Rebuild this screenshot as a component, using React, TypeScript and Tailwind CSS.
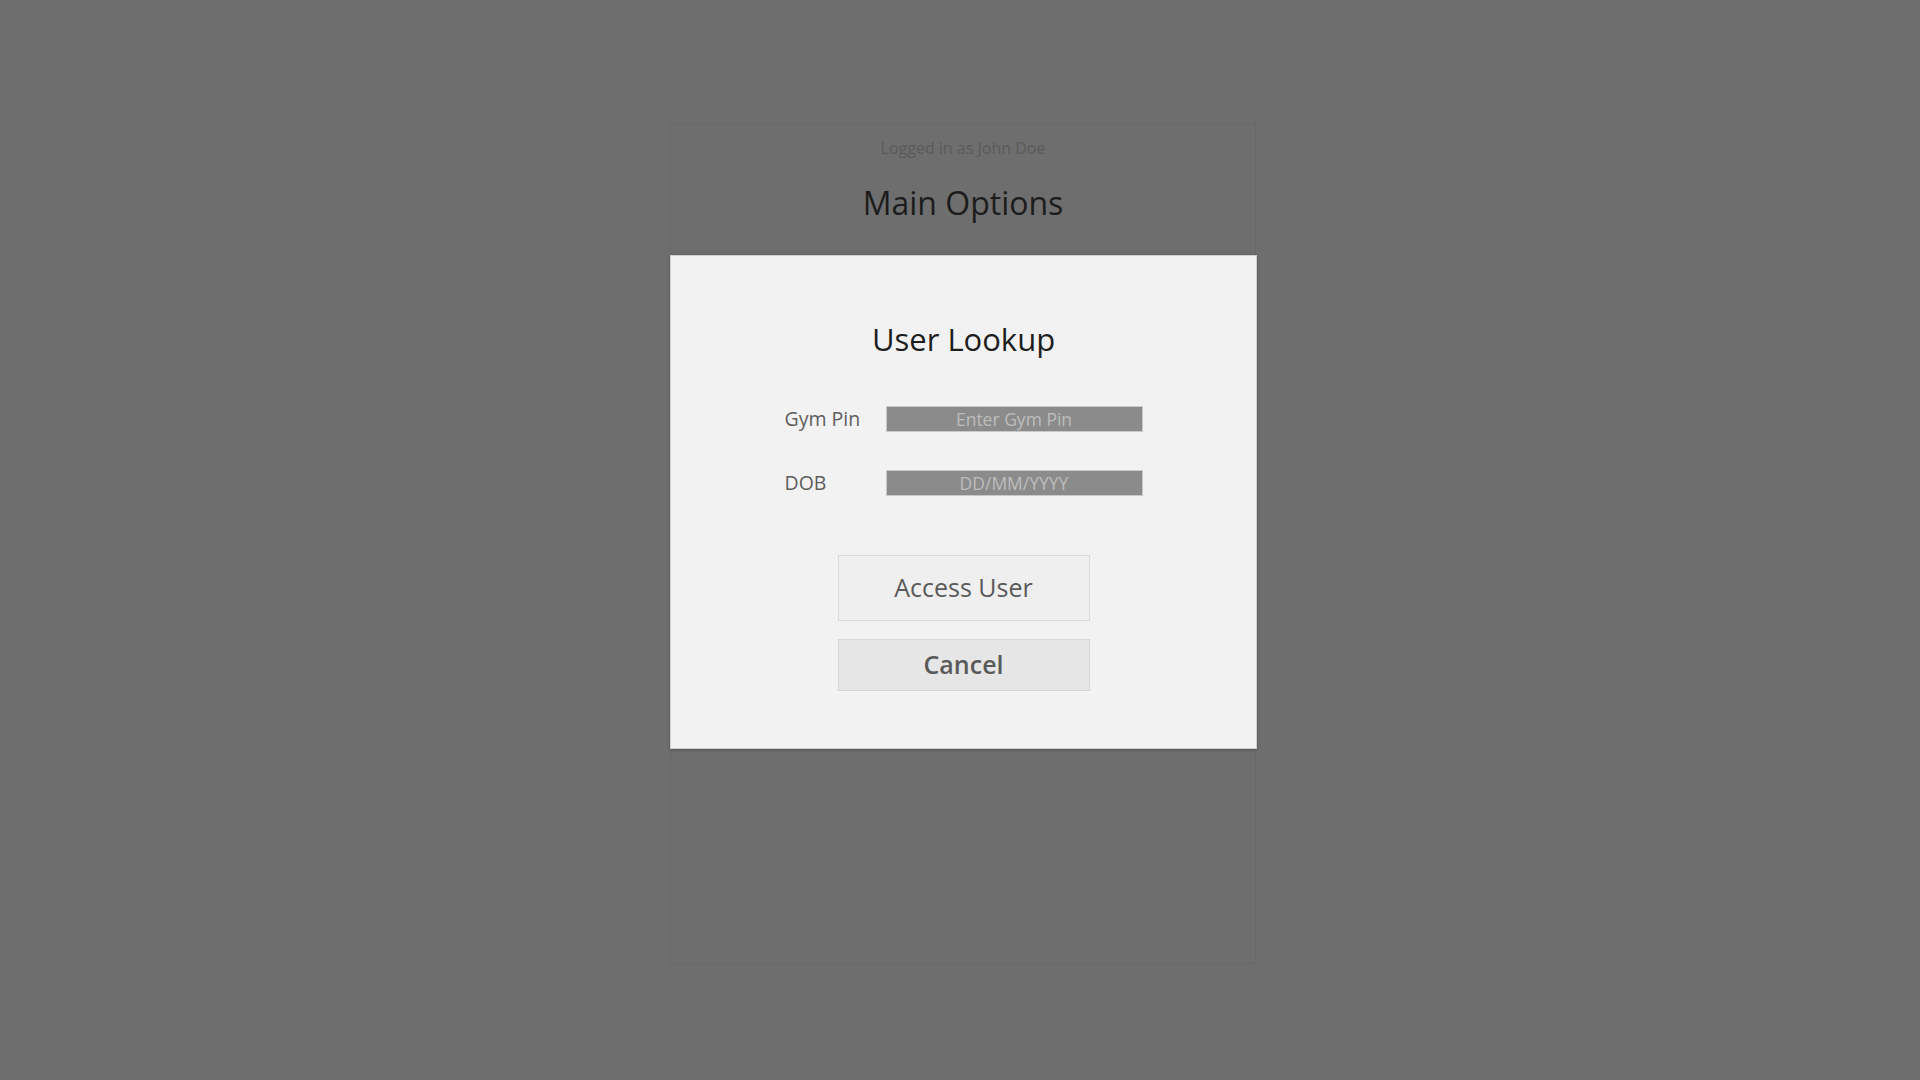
import React from "react";

const font = { fontFamily: '"Open Sans", "Noto Sans", sans-serif' };

function FieldRow({ label, placeholder }: { label: string; placeholder: string }) {
  return (
    <div className="flex items-center h-[26px]">
      <span className="w-[101px] text-[19.5px] text-[#5e5e5e] leading-none">{label}</span>
      <input
        readOnly
        placeholder={placeholder}
        className="w-[257px] h-[26px] bg-[#8b8b8b] border border-[#c9c9c9] text-center text-[17.5px] leading-none text-[#bdbdbd] placeholder:text-[#bdbdbd] outline-none"
      />
    </div>
  );
}

export default function App() {
  return (
    <div className="relative min-h-screen h-[1080px] bg-[#6e6e6e] overflow-hidden" style={font}>
      {/* Main options page (dimmed) */}
      <div className="ml-[670px] mt-[123px] w-[586px] h-[841px] border border-[#686868] flex flex-col items-center">
        <p className="mt-[14px] text-[16px] leading-[20px] text-[#5a5a5a]">Logged in as John Doe</p>
        <h1 className="mt-[23px] text-[32px] leading-[44px] text-[#1c1c1c]">Main Options</h1>
      </div>

      {/* User lookup modal */}
      <div className="absolute left-[670px] top-[255px] w-[587px] h-[494px] bg-[#f2f2f2] border border-[#cfcfcf] shadow-[0_1px_3px_rgba(0,0,0,0.25)] flex flex-col items-center">
        <h2 className="mt-[61px] text-[31px] leading-[44px] text-[#1e1e1e]">User Lookup</h2>

        <div className="mt-[45px] flex flex-col gap-[38px]">
          <FieldRow label="Gym Pin" placeholder="Enter Gym Pin" />
          <FieldRow label="DOB" placeholder="DD/MM/YYYY" />
        </div>

        <div className="mt-[59px] flex flex-col gap-[18px]">
          <button className="w-[252px] h-[66px] bg-[#efefef] border border-[#d9d9d9] text-[25px] text-[#5a5a5a]">
            Access User
          </button>
          <button className="w-[252px] h-[52px] bg-[#e6e6e6] border border-[#d6d6d6] text-[25px] font-semibold text-[#5a5a5a]">
            Cancel
          </button>
        </div>
      </div>
    </div>
  );
}
